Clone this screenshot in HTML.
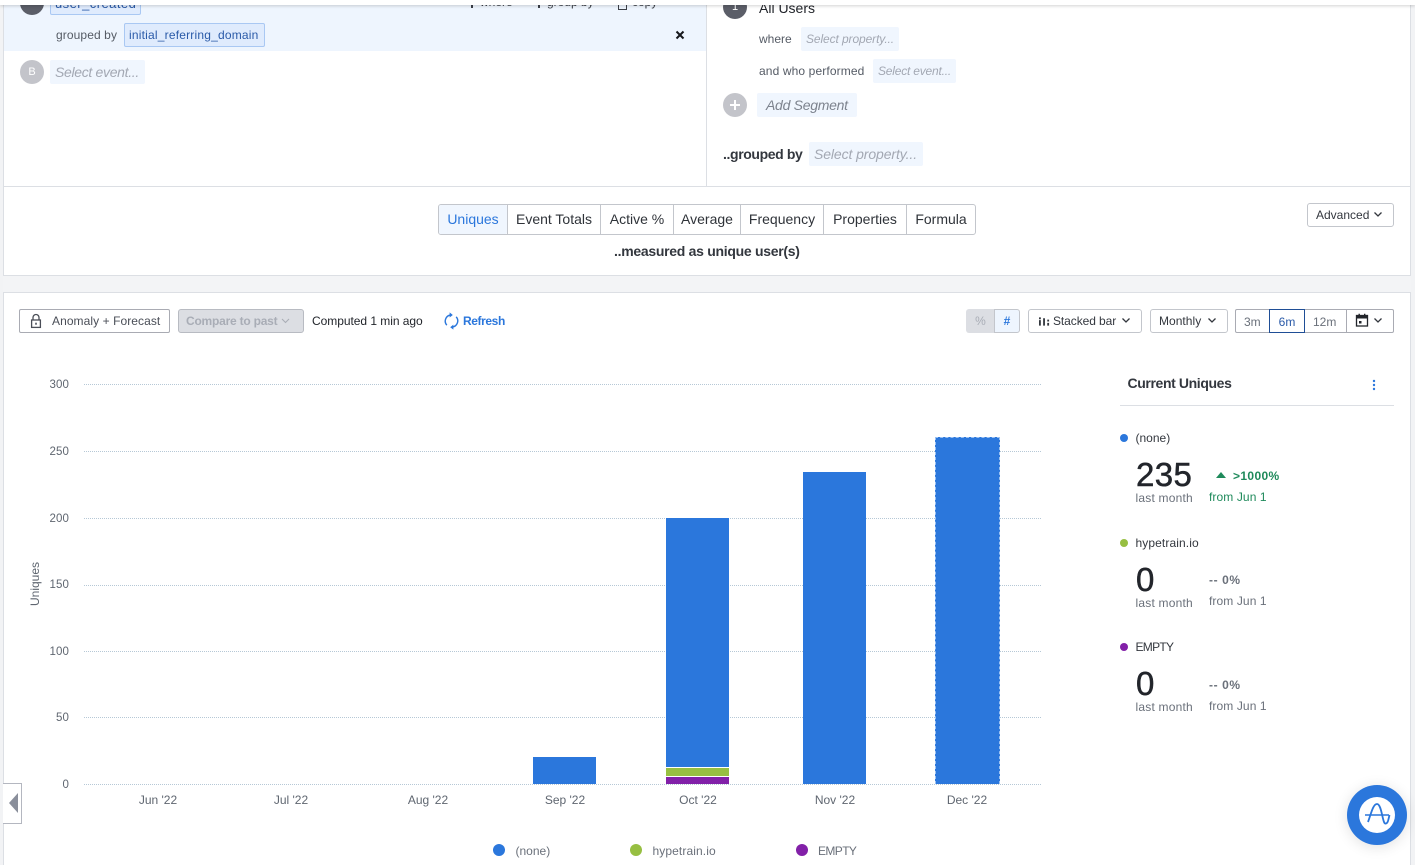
<!DOCTYPE html>
<html><head><meta charset="utf-8">
<style>
html,body{margin:0;padding:0;width:1415px;height:865px;overflow:hidden;background:#fff}
body{position:relative;font-family:"Liberation Sans",sans-serif;color:#22252b;font-size:12px}
.a,.t{position:absolute;box-sizing:border-box}
.t{white-space:nowrap;line-height:16px}
.g{left:84px;width:957px;height:0;border-top:1px dotted #b6c8d6}
.y{width:40px;text-align:right;left:29px;color:#5f6670;font-size:11.5px;letter-spacing:.1px}
.x{color:#5f6670;font-size:12px;text-align:center;width:80px}
.b{background:#2b77dc}
.sel{background:#f0f6fe;border-radius:2px}
.i{font-style:italic;color:#a3a8b3}
.btn{border:1px solid #c3c6cc;border-radius:3px;background:#fff}
.tab{top:204px;height:31px;border-right:1px solid #c3c6cc;font-size:14px;line-height:31px;text-align:center;color:#2f3339}
.m{color:#6a707a}
.lm{letter-spacing:.2px}
.dot{border-radius:50%;width:8px;height:8px}
.big{font-size:33px;line-height:36px;color:#22252b;letter-spacing:.4px;-webkit-text-stroke:.5px #22252b}
</style></head><body>

<!-- page structure -->
<div class="a" style="left:0;top:0;width:4px;height:865px;background:#f2f3f5;border-right:1px solid #dcdfe4"></div>
<div class="a" style="left:1410px;top:0;width:5px;height:865px;background:#f2f3f5;border-left:1px solid #dcdfe4"></div>
<div class="a" style="left:3px;top:275px;width:1408px;height:18px;background:#f3f4f6;border-top:1px solid #dcdfe4;border-bottom:1px solid #dcdfe4"></div>
<div class="a" style="left:3px;top:186px;width:1407px;height:1px;background:#dcdfe4"></div>
<div class="a" style="left:706px;top:5px;width:1px;height:181px;background:#dcdfe4"></div>

<!-- left query area -->
<div class="a" style="left:4px;top:5px;width:702px;height:46px;background:#eef5fe"></div>
<div class="a" style="left:20px;top:-9px;width:24px;height:24px;border-radius:50%;background:#5b5e68"></div>
<div class="a" style="left:50px;top:-8px;width:91px;height:23px;background:#dfebfd;border:1px solid #a9c8f3;border-radius:2px"></div>
<div class="t" style="left:55px;top:-4px;color:#2a5aa8;font-size:13px;letter-spacing:.45px">user_created</div>
<div class="a" style="left:471px;top:5px;width:2px;height:3px;background:#3c4048"></div>
<div class="t" style="left:480px;top:-6px;font-size:12px;color:#3c4048">where</div>
<div class="a" style="left:538px;top:5px;width:2px;height:3px;background:#3c4048"></div>
<div class="t" style="left:547px;top:-6px;font-size:12px;color:#3c4048">group by</div>
<div class="a" style="left:618px;top:1px;width:9px;height:9px;border:1px solid #3c4048"></div>
<div class="t" style="left:632px;top:-6px;font-size:12px;color:#3c4048">copy</div>
<div class="t" style="left:674px;top:-6px;font-size:12px;color:#3c4048">&#215;</div>
<div class="t" style="left:56px;top:27px;color:#555b65;letter-spacing:.1px">grouped by</div>
<div class="a" style="left:124px;top:23px;width:141px;height:24px;background:#dfebfd;border:1px solid #a9c8f3;border-radius:2px"></div>
<div class="t" style="left:129px;top:27px;color:#2a5aa8;letter-spacing:.2px">initial_referring_domain</div>
<svg class="a" style="left:675px;top:30px" width="10" height="10" viewBox="0 0 10 10"><path d="M1.5 1.5l7 7M8.5 1.5l-7 7" stroke="#16181c" stroke-width="2"/></svg>
<div class="a" style="left:20px;top:60px;width:24px;height:24px;border-radius:50%;background:#c3c4ca;color:#fff;font-size:11px;line-height:24px;text-align:center">B</div>
<div class="a sel" style="left:50px;top:60px;width:95px;height:24px"></div>
<div class="t i" style="left:55px;top:64px;font-size:14px;letter-spacing:-.32px">Select event...</div>

<!-- right query area -->
<div class="a" style="left:723px;top:-5px;width:24px;height:24px;border-radius:50%;background:#5b5e68;color:#fff;font-size:11px;line-height:24px;text-align:center">1</div>
<div class="t" style="left:759px;top:0;font-size:14px;color:#22252b">All Users</div>
<div class="t" style="left:759px;top:31px;color:#555b65">where</div>
<div class="a sel" style="left:801px;top:27px;width:98px;height:24px"></div>
<div class="t i" style="left:806px;top:31px;letter-spacing:-.1px">Select property...</div>
<div class="t" style="left:759px;top:63px;color:#555b65;letter-spacing:.12px">and who performed</div>
<div class="a sel" style="left:873px;top:59px;width:83px;height:24px"></div>
<div class="t i" style="left:878px;top:63px;letter-spacing:-.2px">Select event...</div>
<div class="a" style="left:723px;top:93px;width:24px;height:24px;border-radius:50%;background:#c3c4ca"></div>
<svg class="a" style="left:729px;top:99px" width="12" height="12" viewBox="0 0 12 12"><path d="M6 1v10M1 6h10" stroke="#fff" stroke-width="2"/></svg>
<div class="a sel" style="left:757px;top:93px;width:100px;height:24px"></div>
<div class="t i" style="left:766px;top:97px;font-size:14px;color:#7d838e;letter-spacing:-.28px">Add Segment</div>
<div class="t" style="left:723px;top:146px;font-size:14px;font-weight:bold;color:#33373e;letter-spacing:-.38px">..grouped by</div>
<div class="a sel" style="left:809px;top:142px;width:114px;height:24px"></div>
<div class="t i" style="left:814px;top:146px;font-size:14px;letter-spacing:-.1px">Select property...</div>

<!-- tabs -->
<div class="a" style="left:438px;top:204px;width:538px;height:31px;border:1px solid #c3c6cc;border-radius:3px;background:#fff"></div>
<div class="a sel" style="left:439px;top:205px;width:68px;height:29px"></div>
<div class="a tab" style="left:439px;width:69px;color:#2b77dc">Uniques</div>
<div class="a tab" style="left:508px;width:93px">Event Totals</div>
<div class="a tab" style="left:601px;width:73px">Active %</div>
<div class="a tab" style="left:674px;width:67px">Average</div>
<div class="a tab" style="left:741px;width:83px">Frequency</div>
<div class="a tab" style="left:824px;width:83px">Properties</div>
<div class="a tab" style="left:907px;width:68px;border-right:0">Formula</div>
<div class="t" style="left:614px;top:243px;font-size:14px;font-weight:bold;color:#33373e;letter-spacing:-.29px">..measured as unique user(s)</div>
<div class="a btn" style="left:1307px;top:203px;width:87px;height:24px"></div>
<div class="t" style="left:1316px;top:207px;color:#33373e">Advanced</div>
<svg class="a" style="left:1373px;top:211px" width="10" height="7" viewBox="0 0 10 7"><path d="M1.5 1.5L5 5l3.5-3.5" fill="none" stroke="#33373e" stroke-width="1.3"/></svg>

<!-- chart toolbar -->
<div class="a" style="left:19px;top:309px;width:151px;height:24px;border:1px solid #a9abb3;border-radius:2px"></div>
<svg class="a" style="left:29px;top:313px" width="14" height="16" viewBox="0 0 14 16"><path d="M4 7V4.500a3 3 0 0 1 6 0V7" fill="none" stroke="#4a4e57" stroke-width="1.300"/><rect x="2.600" y="7" width="8.800" height="7.400" fill="none" stroke="#4a4e57" stroke-width="1.300"/><rect x="6.200" y="9.700" width="1.600" height="2" fill="#4a4e57"/></svg>
<div class="t" style="left:52px;top:313px;color:#4a4e57;letter-spacing:.07px">Anomaly + Forecast</div>
<div class="a" style="left:178px;top:309px;width:126px;height:24px;background:#dcdee3;border:1px solid #b8bbc2;border-radius:3px"></div>
<div class="t" style="left:186px;top:313px;color:#a9adb6;font-weight:bold;letter-spacing:-.22px">Compare to past</div>
<svg class="a" style="left:281px;top:318px" width="9" height="6" viewBox="0 0 9 6"><path d="M1 1l3.500 3.500L8 1" fill="none" stroke="#a9adb6" stroke-width="1.100"/></svg>
<div class="t" style="left:312px;top:313px;color:#22252b;letter-spacing:-.04px">Computed 1 min ago</div>
<svg class="a" style="left:444px;top:311px" width="15" height="20" viewBox="0 0 16 20"><path d="M3 14.500A6.600 6.600 0 0 1 7 3.600M13 5.500a6.600 6.600 0 0 1-4 10.900" fill="none" stroke="#2b77dc" stroke-width="1.500"/><path d="M6 .8l3.400 2.800L6 6.200zM10 13.800l-3.400 2.800 3.400 2.600z" fill="#2b77dc"/></svg>
<div class="t" style="left:463px;top:313px;color:#2b77dc;font-weight:bold;letter-spacing:-.4px">Refresh</div>

<div class="a" style="left:966px;top:309px;width:29px;height:24px;background:#dcdee3;border-radius:3px 0 0 3px;color:#a9adb6;text-align:center;line-height:24px">%</div>
<div class="a" style="left:994px;top:309px;width:26px;height:24px;background:#eef5fe;border:1px solid #c3c6cc;border-radius:0 3px 3px 0;color:#2b77dc;text-align:center;line-height:22px;font-weight:bold">#</div>
<div class="a btn" style="left:1028px;top:309px;width:114px;height:24px"></div>
<svg class="a" style="left:1039px;top:316px" width="11" height="11" viewBox="0 0 12 11"><path d="M0 4h2v6H0zM0 1h2v2H0zM4.500 2h2v8h-2zM9 7h2v3H9zM9 3.500h2v2H9z" fill="#33373e"/></svg>
<div class="t" style="left:1053px;top:313px;color:#33373e;letter-spacing:-.08px">Stacked bar</div>
<svg class="a" style="left:1121px;top:317px" width="10" height="7" viewBox="0 0 10 7"><path d="M1.500 1.500L5 5l3.500-3.500" fill="none" stroke="#33373e" stroke-width="1.300"/></svg>
<div class="a btn" style="left:1150px;top:309px;width:78px;height:24px"></div>
<div class="t" style="left:1159px;top:313px;color:#33373e;letter-spacing:.03px">Monthly</div>
<svg class="a" style="left:1207px;top:317px" width="10" height="7" viewBox="0 0 10 7"><path d="M1.500 1.500L5 5l3.500-3.500" fill="none" stroke="#33373e" stroke-width="1.300"/></svg>
<div class="a" style="left:1235px;top:309px;width:159px;height:24px;border:1px solid #a9abb3;border-radius:2px"></div>
<div class="t" style="left:1244px;top:314px;color:#6a707a">3m</div>
<div class="a" style="left:1269px;top:309px;width:36px;height:24px;border:1px solid #1f4e96;background:#fff;color:#2a5aa8;text-align:center;line-height:24px">6m</div>
<div class="t" style="left:1313px;top:314px;color:#6a707a">12m</div>
<div class="a" style="left:1346px;top:309px;width:1px;height:24px;background:#a9abb3"></div>
<svg class="a" style="left:1355px;top:313px" width="14" height="15" viewBox="0 0 14 15"><rect x="1.500" y="2.500" width="11" height="10.500" fill="none" stroke="#22252b" stroke-width="1.300"/><path d="M1.500 3h11v2.500h-11zM3.500 .8h1.400v2h-1.400zM9 .8h1.400v2H9zM4 8h2.500v2.500H4z" fill="#22252b"/></svg>
<svg class="a" style="left:1373px;top:317px" width="10" height="7" viewBox="0 0 10 7"><path d="M1.500 1.500L5 5l3.500-3.500" fill="none" stroke="#33373e" stroke-width="1.300"/></svg>

<!-- chart -->
<div class="a g" style="top:384px"></div>
<div class="a g" style="top:451px"></div>
<div class="a g" style="top:518px"></div>
<div class="a g" style="top:585px"></div>
<div class="a g" style="top:651px"></div>
<div class="a g" style="top:717px"></div>
<div class="a g" style="top:784px"></div>
<div class="t y" style="top:377px">300</div>
<div class="t y" style="top:444px">250</div>
<div class="t y" style="top:511px">200</div>
<div class="t y" style="top:577px">150</div>
<div class="t y" style="top:644px">100</div>
<div class="t y" style="top:710px">50</div>
<div class="t y" style="top:777px">0</div>
<div class="t" style="left:7px;top:576px;width:56px;text-align:center;color:#5f6670;transform:rotate(-90deg)">Uniques</div>

<div class="a b" style="left:533px;top:757px;width:63px;height:27px"></div>
<div class="a b" style="left:666px;top:518px;width:63px;height:249px"></div>
<div class="a" style="left:666px;top:768px;width:63px;height:8px;background:#97bf42"></div>
<div class="a" style="left:666px;top:777px;width:63px;height:7px;background:#8220a8"></div>
<div class="a b" style="left:803px;top:472px;width:63px;height:312px"></div>
<div class="a b" style="left:935px;top:437px;width:65px;height:347px;border:1px dashed #9cc2f2;border-bottom:0"></div>

<div class="t x" style="left:118px;top:792px">Jun '22</div>
<div class="t x" style="left:251px;top:792px">Jul '22</div>
<div class="t x" style="left:388px;top:792px">Aug '22</div>
<div class="t x" style="left:525px;top:792px">Sep '22</div>
<div class="t x" style="left:658px;top:792px">Oct '22</div>
<div class="t x" style="left:795px;top:792px">Nov '22</div>
<div class="t x" style="left:927px;top:792px">Dec '22</div>

<div class="a dot" style="left:493px;top:844px;width:12px;height:12px;background:#2b77dc"></div>
<div class="t m" style="left:515.500px;top:843px">(none)</div>
<div class="a dot" style="left:630px;top:844px;width:12px;height:12px;background:#97bf42"></div>
<div class="t m" style="left:652.500px;top:843px;letter-spacing:.1px">hypetrain.io</div>
<div class="a dot" style="left:796px;top:844px;width:12px;height:12px;background:#8220a8"></div>
<div class="t m" style="left:818px;top:843px;letter-spacing:-.6px">EMPTY</div>

<!-- left expander -->
<div class="a" style="left:3px;top:783px;width:19px;height:41px;border:1px solid #b4b7c0;border-left:0;background:#fff"></div>
<svg class="a" style="left:8px;top:791px" width="11" height="24" viewBox="0 0 11 24"><path d="M10 2v20L1 12z" fill="#8a8f9b"/></svg>

<!-- right summary -->
<div class="t" style="left:1127.500px;top:375px;font-size:14px;font-weight:bold;color:#33373e;letter-spacing:-.38px">Current Uniques</div>
<svg class="a" style="left:1372px;top:379px" width="4" height="12" viewBox="0 0 4 12"><circle cx="2" cy="2" r="1.200" fill="#2b77dc"/><circle cx="2" cy="6" r="1.200" fill="#2b77dc"/><circle cx="2" cy="10" r="1.200" fill="#2b77dc"/></svg>
<div class="a" style="left:1120px;top:405px;width:274px;height:1px;background:#dcdfe4"></div>

<div class="a dot" style="left:1120px;top:434px;background:#2b77dc"></div>
<div class="t" style="left:1135.500px;top:430px;color:#33373e">(none)</div>
<div class="t big" style="left:1136px;top:457px">235</div>
<div class="t m lm" style="left:1135.500px;top:490px">last month</div>
<svg class="a" style="left:1216px;top:472px" width="10" height="6" viewBox="0 0 10 6"><path d="M5 0l5 6H0z" fill="#1f8a5b"/></svg>
<div class="t" style="left:1233px;top:468px;color:#1f8a5b;font-weight:bold;letter-spacing:.37px">&gt;1000%</div>
<div class="t" style="left:1209px;top:489px;color:#1f8a5b;letter-spacing:.1px">from Jun 1</div>

<div class="a dot" style="left:1120px;top:539px;background:#97bf42"></div>
<div class="t" style="left:1135.500px;top:535px;color:#33373e;letter-spacing:.1px">hypetrain.io</div>
<div class="t big" style="left:1136px;top:562px">0</div>
<div class="t m lm" style="left:1135.500px;top:595px">last month</div>
<div class="t m" style="left:1209px;top:572px;font-weight:bold;letter-spacing:.6px">-- 0%</div>
<div class="t m" style="left:1209px;top:593px;letter-spacing:.1px">from Jun 1</div>

<div class="a dot" style="left:1120px;top:643px;background:#8220a8"></div>
<div class="t" style="left:1135.500px;top:639px;color:#33373e;letter-spacing:-.7px">EMPTY</div>
<div class="t big" style="left:1136px;top:666px">0</div>
<div class="t m lm" style="left:1135.500px;top:699px">last month</div>
<div class="t m" style="left:1209px;top:677px;font-weight:bold;letter-spacing:.6px">-- 0%</div>
<div class="t m" style="left:1209px;top:698px;letter-spacing:.1px">from Jun 1</div>

<!-- fab -->
<div class="a" style="left:1347px;top:785px;width:60px;height:60px;border-radius:50%;background:#2b77dc;box-shadow:0 2px 14px rgba(0,0,0,.12)"></div>
<div class="a" style="left:1359px;top:797px;width:36px;height:36px;border-radius:50%;background:#fff"></div>
<svg class="a" style="left:1359px;top:797px" width="36" height="36" viewBox="0 0 36 36"><path d="M6 18h24" stroke="#2b77dc" stroke-width="1.500" fill="none"/><path d="M9 25c3-8 5-18 9-18s5 13 7 18c1 2.500 3 2 4-1 .6-2 1-4 1.500-6" stroke="#2b77dc" stroke-width="1.800" fill="none"/></svg>

<!-- top shadow bar -->
<div class="a" style="left:0;top:0;width:1415px;height:5px;background:#fff;box-shadow:0 1px 3px rgba(0,0,0,.18)"></div>
</body></html>
